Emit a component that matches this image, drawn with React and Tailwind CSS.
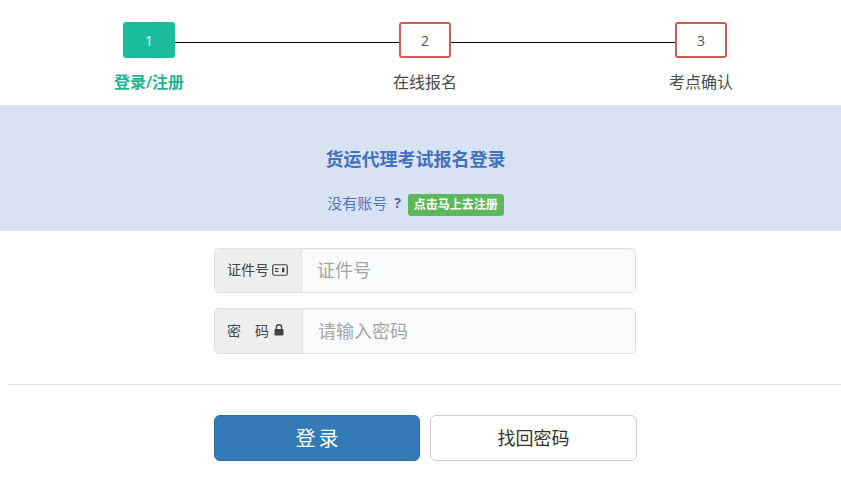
import React from "react";

const font = "font-['Open_Sans','Noto_Sans_CJK_SC',sans-serif]";

function Box({ n, active }) {
  return (
    <div
      className={
        "w-[52px] h-[36px] shrink-0 flex items-center justify-center rounded-[3px] text-[14px] " +
        (active
          ? "bg-[#1abc9c] text-white"
          : "border-2 border-[#cc5e55] bg-white text-[#555]")
      }
    >
      {n}
    </div>
  );
}

function Line() {
  return <div className="flex-1 h-px bg-black mt-1" />;
}

function Label({ children, active }) {
  return (
    <div
      className={
        "w-[276px] text-center text-[16px] leading-[22px] " +
        (active ? "text-[#1fb394] font-semibold" : "text-[#4a4a4a]")
      }
    >
      {children}
    </div>
  );
}

function CardIcon() {
  return (
    <svg width="16" height="12" viewBox="0 0 16 12" fill="none" className="ml-[3px]">
      <rect x="0.75" y="0.75" width="14.5" height="10.5" rx="1.5" stroke="#444" strokeWidth="1.2" />
      <rect x="3" y="4" width="3.5" height="1.2" fill="#444" />
      <rect x="3" y="6.8" width="3.5" height="1.2" fill="#444" />
      <rect x="10" y="3.8" width="2.4" height="4.4" fill="#444" />
    </svg>
  );
}

function LockIcon() {
  return (
    <svg width="10" height="12" viewBox="0 0 10 12" className="ml-[5px]">
      <path d="M2.4 5.2V3.4a2.6 2.6 0 0 1 5.2 0v1.8" fill="none" stroke="#444" strokeWidth="1.4" />
      <rect x="0.5" y="5" width="9" height="6.5" rx="1" fill="#444" />
    </svg>
  );
}

function Field({ addonWidth, addon, placeholder, height, className = "" }) {
  return (
    <div className={"w-[422px] flex rounded-[5px] border border-[#dcdfe3] overflow-hidden " + height + " " + className}>
      <div className={"bg-[#eeeeee] border-r border-[#e4e4e4] flex items-center pl-3 pb-[2px] text-[14px] text-[#444] shrink-0 " + addonWidth}>
        {addon}
      </div>
      <input
        placeholder={placeholder}
        readOnly
        className="flex-1 min-w-0 bg-[#f9fafc] pl-[15px] text-[18px] text-[#555] placeholder:text-[#a6a6a6] outline-none shadow-[inset_0_1px_1px_rgba(0,0,0,0.05)]"
      />
    </div>
  );
}

export default function App() {
  return (
    <div className={"w-[841px] h-[486px] bg-white overflow-hidden " + font}>
      <div className="pt-[22px] h-[105px]">
        <div className="flex items-center ml-[123px] w-[604px]">
          <Box n="1" active />
          <Line />
          <Box n="2" />
          <Line />
          <Box n="3" />
        </div>
        <div className="flex ml-[11px] mt-[13px]">
          <Label active>登录/注册</Label>
          <Label>在线报名</Label>
          <Label>考点确认</Label>
        </div>
      </div>

      <div className="h-[126px] bg-[#d9e2f2] flex flex-col items-center pt-[42px] pr-[10px]">
        <div className="text-[18px] leading-6 font-bold text-[#4272bf]">货运代理考试报名登录</div>
        <div className="flex items-center mt-[21px] text-[15px] leading-[22px] text-[#4f78bd]">
          <span className="mb-[4px]">没有账号</span>
          <span className="ml-[7px] mb-[4px] font-bold text-[#3f6cb5] text-[14px]">?</span>
          <span className="ml-[7px] h-[22px] w-[96px] flex items-center justify-center rounded-[3px] bg-[#5cb85c] text-white text-[12px] font-bold">
            点击马上去注册
          </span>
        </div>
      </div>

      <div className="flex flex-col ml-[214px] pt-[17px]">
        <Field
          height="h-[45px]"
          addonWidth="w-[87px]"
          placeholder="证件号"
          addon={
            <>
              <span>证件号</span>
              <CardIcon />
            </>
          }
        />
        <Field
          height="h-[46px]"
          className="mt-[15px]"
          addonWidth="w-[88px]"
          placeholder="请输入密码"
          addon={
            <>
              <span className="whitespace-pre">密　码</span>
              <LockIcon />
            </>
          }
        />
      </div>

      <div className="ml-2 mt-[30px] h-px bg-[#e3e3e3]" />

      <div className="flex ml-[214px] mt-[30px] gap-[10px]">
        <button className="w-[206px] h-[46px] pt-[2px] rounded-[6px] bg-[#337ab7] border border-[#2e6da4] text-white text-[20px] [word-spacing:-2px]">
          登 录
        </button>
        <button className="w-[207px] h-[46px] rounded-[6px] bg-white border border-[#cccccc] text-[#333] text-[18px]">
          找回密码
        </button>
      </div>
    </div>
  );
}
